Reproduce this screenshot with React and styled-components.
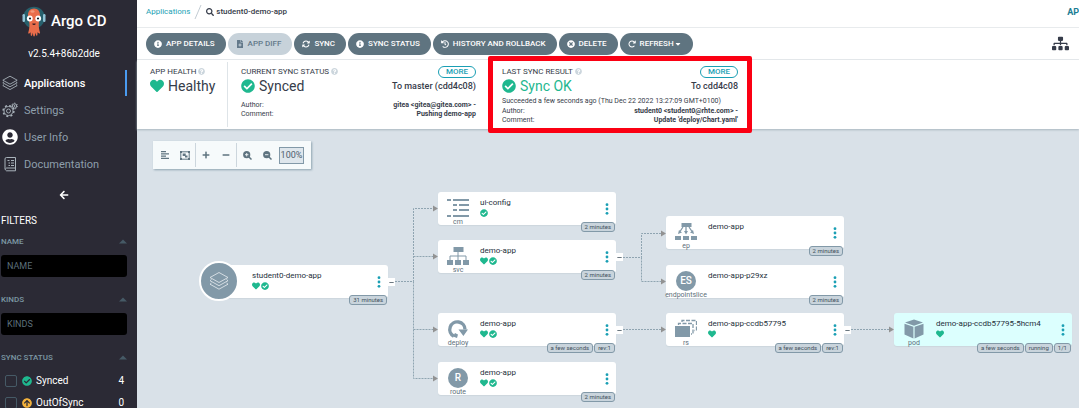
import React from "react";
import styled, { createGlobalStyle, css } from "styled-components";
import {
  FaInfoCircle, FaFileMedical, FaHistory, FaTimesCircle, FaCaretDown,
  FaSitemap, FaSearch, FaHeart, FaCheckCircle, FaArrowCircleUp, FaQuestionCircle,
  FaPlus, FaMinus, FaUserCircle, FaArrowLeft,
} from "react-icons/fa";
import { FaArrowsRotate, FaArrowRotateRight } from "react-icons/fa6";

const c = {
  side: "#2b2a35",
  text: "#363c4a",
  teal: "#1a9fb4",
  green: "#1fb88f",
  slate: "#5f7480",
  mid: "#8299a8",
  canvas: "#d9e1e8",
};

const Global = createGlobalStyle`
  *, *::before, *::after { box-sizing: border-box; }
  body { margin: 0; font-family: Roboto, "Liberation Sans", sans-serif; color: ${c.text}; background: ${c.canvas}; }
  button, input { font-family: inherit; margin: 0; }
  button { border: 0; padding: 0; background: none; color: inherit; cursor: pointer; }
  a { text-decoration: none; }
  svg { display: block; flex: none; }
  h1, h2, p, ul, dl, dd { margin: 0; padding: 0; }
`;

const Shell = styled.div`
  display: flex;
  height: 100vh;
  overflow: hidden;
`;

/* Sidebar */
const Sidebar = styled.aside`
  flex: none;
  width: 137px;
  background: ${c.side};
  color: #fff;
  overflow: hidden;
`;
const Brand = styled.div`
  display: flex;
  align-items: center;
  gap: 5px;
  padding: 5px 0 0 22px;
  font-size: 15px;
  line-height: 32px;
  font-weight: 500;
`;
const Version = styled.p`
  padding: 8px 9px 0 0;
  text-align: center;
  font-size: 10px;
  line-height: 17px;
`;
const Nav = styled.nav`
  display: flex;
  flex-direction: column;
  padding: 8px 10px 0 0;
`;
const NavLink = styled.a`
  display: flex;
  align-items: center;
  gap: 6px;
  height: 26px;
  padding-left: 2px;
  margin-bottom: 1px;
  font-size: 11px;
  color: ${(p) => (p.$active ? "#fff" : "#8e9fab")};
  font-weight: ${(p) => (p.$active ? 500 : 400)};
  border-right: 2px solid ${(p) => (p.$active ? "#4a9bf0" : "transparent")};
  svg { color: ${(p) => (p.$light ? "#fff" : "#a9b3bb")}; }
`;
const Collapse = styled.button`
  display: flex;
  justify-content: center;
  width: 128px;
  padding: 12px 0 13px;
`;
const Filters = styled.section`
  padding: 0 10px 0 1px;
`;
const FiltersTitle = styled.h2`
  font-size: 10px;
  line-height: 16px;
  font-weight: 400;
  margin-bottom: 8px;
`;
const FilterHead = styled.button`
  display: flex;
  justify-content: space-between;
  align-items: center;
  width: 100%;
  height: 10px;
  font-size: 8px;
  line-height: 10px;
  font-weight: 500;
  color: #7c98a4;
  svg { color: #465a66; }
`;
const FilterInput = styled.input`
  display: block;
  width: 100%;
  height: 22px;
  margin: 8px 0 18px;
  padding: 0 6px;
  border: 0;
  border-radius: 3px;
  background: #000;
  color: #fff;
  font-size: 9px;
  &::placeholder { color: #5c6f7a; opacity: 1; }
`;
const CheckList = styled.div`
  padding-top: 7px;
`;
const CheckRow = styled.label`
  display: flex;
  align-items: center;
  gap: 4px;
  height: 22px;
  padding: 0 3px 0 4px;
  font-size: 10px;
  line-height: 10px;
  span { flex: 1; }
`;
const Check = styled.input`
  appearance: none;
  width: 12px;
  height: 12px;
  border: 1px solid #465a66;
  border-radius: 2px;
  margin-right: 1px;
`;

/* Main column */
const Main = styled.main`
  flex: 1;
  min-width: 0;
  display: flex;
  flex-direction: column;
`;
const Bar = styled.div`
  flex: none;
  display: flex;
  align-items: center;
  background: #fff;
  border-bottom: 1px solid #e8ebed;
`;
const Crumbs = styled(Bar)`
  height: 28px;
  padding: 0 0 4px 9px;
  font-size: 8px;
  a { color: ${c.teal}; }
`;
const Crumb = styled.span`
  display: flex;
  align-items: center;
  gap: 2px;
  font-weight: 500;
`;
const PageTitle = styled.span`
  margin-left: auto;
  font-size: 9px;
  font-weight: 700;
  color: #1a7d94;
`;
const Actions = styled(Bar)`
  height: 32px;
  gap: 2px;
  padding: 0 10px 0 9px;
`;
const Action = styled.button`
  display: flex;
  align-items: center;
  gap: 4px;
  height: 22px;
  padding: 0 11px 0 8px;
  border-radius: 11px;
  background: ${c.slate};
  color: #fff;
  font-size: 8px;
  font-weight: 500;
  white-space: nowrap;
  ${(p) => p.disabled && css`background: #c7d2da; color: #63798a;`}
`;
const ActionText = styled.span`
  display: flex;
  align-items: center;
`;
const ViewButton = styled.button`
  margin-left: auto;
`;
const Status = styled.section`
  position: relative;
  z-index: 1;
  flex: none;
  display: flex;
  height: 69px;
  padding: 2px 0;
  background: #fff;
  box-shadow: 0 1px 2px #a9b6bf;
`;
const Panel = styled.div`
  position: relative;
  width: ${(p) => p.$width}px;
  padding: 4px 13px 0;
  ${(p) => p.$divided && css`border-right: 1px solid #dee4e8;`}
`;
const PanelTop = styled.div`
  display: flex;
  justify-content: space-between;
  align-items: center;
  height: 11px;
`;
const PanelLabel = styled.h2`
  display: flex;
  align-items: center;
  gap: 2px;
  font-size: 8px;
  font-weight: 400;
  white-space: nowrap;
  svg { color: #ccd6dd; }
`;
const More = styled.button`
  width: 38px;
  height: 12px;
  border: 1px solid ${c.teal};
  border-radius: 6px;
  color: ${c.teal};
  font-size: 8px;
  line-height: 10px;
  font-weight: 500;
`;
const PanelValue = styled.div`
  display: flex;
  justify-content: space-between;
  align-items: center;
  height: 17px;
  font-size: 9px;
  font-weight: 500;
`;
const Big = styled.div`
  display: flex;
  align-items: center;
  gap: 4px;
  font-size: 14px;
  line-height: 16px;
  font-weight: 400;
  color: ${(p) => (p.$ok ? c.green : c.text)};
  svg { color: ${c.green}; }
`;
const Note = styled.p`
  margin-top: 3px;
  font-size: 7px;
  line-height: 8px;
  white-space: nowrap;
`;
const Facts = styled.dl`
  display: grid;
  grid-template-columns: auto auto;
  justify-content: space-between;
  margin-top: ${(p) => p.$gap}px;
  font-size: 7px;
  line-height: 9px;
  dd { text-align: right; font-weight: 700; }
`;
const Highlight = styled.div`
  position: absolute;
  inset: -6px -1px -6px -1px;
  border: 5px solid #fb0013;
  border-radius: 2px;
  pointer-events: none;
`;

/* Resource tree */
const Canvas = styled.section`
  position: relative;
  flex: 1;
  min-height: 0;
  overflow: hidden;
  background: ${c.canvas};
`;
const Tools = styled.div`
  display: inline-flex;
  align-items: center;
  height: 28px;
  margin: 12px 16px;
  padding: 2px 7px 2px 2px;
  background: #f6fafb;
  box-shadow: 1px 1px 2px #8fa4b1;
  color: ${c.slate};
`;
const ToolGroup = styled.div`
  display: flex;
  align-items: center;
  height: 24px;
  & + & { border-left: 1px solid #ccd6dd; }
`;
const Tool = styled.button`
  display: flex;
  justify-content: center;
  width: 20px;
`;
const Zoom = styled.span`
  width: 25px;
  height: 17px;
  margin-left: 2px;
  border: 1px solid ${c.mid};
  background: #dee6ec;
  color: #4d606c;
  font-size: 9px;
  line-height: 15px;
  display: flex;
  justify-content: center;
`;
const Edges = styled.svg`
  position: absolute;
  top: 0;
  left: 0;
  width: 942px;
  height: 279px;
  pointer-events: none;
`;
const NodeCard = styled.article`
  position: absolute;
  left: ${(p) => p.$x}px;
  top: ${(p) => p.$y}px;
  display: flex;
  width: 178px;
  height: 33px;
  border-radius: 3px;
  background: ${(p) => (p.$live ? "#dcfffe" : "#fff")};
  box-shadow: 0 1px 1px #ccd6dd;
`;
const Kind = styled.div`
  display: flex;
  flex-direction: column;
  align-items: center;
  width: 42px;
  padding: 6px 2px 0 0;
  color: ${c.mid};
`;
const KindName = styled.span`
  margin-top: 1px;
  font-size: 7px;
  line-height: 7px;
  color: #5c6f7a;
`;
const Letter = styled.span`
  width: 20px;
  height: 20px;
  border-radius: 50%;
  background: ${c.mid};
  color: #fff;
  font-size: 10px;
  line-height: 20px;
  font-weight: 500;
  text-align: center;
`;
const RootDisc = styled.div`
  position: absolute;
  left: -11px;
  top: -4px;
  display: flex;
  align-items: center;
  justify-content: center;
  width: 40px;
  height: 40px;
  border: 2px solid #fff;
  border-radius: 50%;
  background: ${c.mid};
  color: #e8edf1;
`;
const NodeBody = styled.div`
  flex: 1;
  padding-top: 5px;
  font-size: 8px;
  line-height: 12px;
  white-space: nowrap;
  color: #25303b;
`;
const Marks = styled.div`
  display: flex;
  gap: 1px;
  color: ${c.green};
`;
const Menu = styled.button`
  align-self: center;
  margin-right: 7px;
  color: ${c.teal};
`;
const Badges = styled.div`
  position: absolute;
  right: 1px;
  bottom: -7px;
  display: flex;
  gap: 1px;
`;
const Badge = styled.span`
  height: 10px;
  padding: 0 3px;
  border: 1px solid ${c.mid};
  border-radius: 3px;
  background: #c9d4dc;
  color: #3f4f5b;
  font-size: 6px;
  line-height: 8px;
  white-space: nowrap;
`;
const Toggle = styled.button`
  position: absolute;
  right: -7px;
  top: 13px;
  width: 7px;
  height: 8px;
  display: flex;
  align-items: center;
  justify-content: center;
  background: #fff;
  color: #6b7780;
`;

const Octopus = () => (
  <svg width="24" height="32" viewBox="0 0 24 32">
    <circle cx="12" cy="12.500" r="10.800" fill="#27606c" />
    <rect x="0.500" y="9" width="2.500" height="8" rx="1.200" fill="#8fc3d6" />
    <rect x="21" y="9" width="2.500" height="8" rx="1.200" fill="#8fc3d6" />
    <path d="M12 3.500c-3.700 0-6 2.800-6 6.500 0 3.500 1.200 6 1.400 8.500.2 3-.2 6-1.100 9-.3 1.100.6 1.500 1.300.8l1-1 .1 2.700c.1 1.100 1.200 1.200 1.500.1l.6-2.400.5 3c.2.900 1.300.9 1.500 0l.5-3 .7 2.400c.3.900 1.300.8 1.400-.2l.1-2.600 1.300 1c.8.500 1.500 0 1.200-.9-.9-3-1.400-6-1.200-8.900.1-2.500 1.200-5 1.200-8.500 0-3.700-2.300-6.500-6-6.500z" fill="#e96d4b" />
    <ellipse cx="10.500" cy="6.500" rx="2" ry="1.300" fill="#f59a7c" />
    <circle cx="7.800" cy="13.500" r="2.900" fill="#fff" />
    <circle cx="16.200" cy="13.500" r="2.900" fill="#fff" />
    <circle cx="8" cy="13.500" r="1.100" fill="#171b24" />
    <circle cx="16" cy="13.500" r="1.100" fill="#171b24" />
    <path d="M10.300 18.500h3.400c0 2-3.400 2-3.400 0z" fill="#432126" />
  </svg>
);
const CaretUp = () => (
  <svg width="8" height="8" viewBox="0 0 8 8"><path d="M4 1.500 8 5.500H0z" fill="currentColor" /></svg>
);
const Layers = ({ size, weight = 1.1 }) => (
  <svg width={size} height={size} viewBox="0 0 20 20" fill="none" stroke="currentColor" strokeWidth={weight} strokeLinejoin="round">
    <path d="M10 1.500 19 6.500 10 11.500 1 6.500z" />
    <path d="M2.500 8.500 1 9.700l9 5 9-5-1.500-1.200" />
    <path d="M2.500 12 1 13.200l9 5 9-5-1.500-1.200" />
  </svg>
);
const Gears = () => (
  <svg width="16" height="16" viewBox="0 0 16 16" fill="none" stroke="currentColor">
    <circle cx="6.500" cy="9" r="4.500" strokeWidth="0.900" />
    <circle cx="6.500" cy="9" r="5.400" strokeWidth="1.500" strokeDasharray="2 2.240" />
    <circle cx="6.500" cy="9" r="2" strokeWidth="0.900" />
    <circle cx="12.500" cy="4" r="2.200" strokeWidth="0.900" />
    <circle cx="12.500" cy="4" r="2.900" strokeWidth="1" strokeDasharray="1.200 1.400" />
    <circle cx="12.500" cy="4" r="0.600" />
  </svg>
);
const Docs = () => (
  <svg width="16" height="16" viewBox="0 0 16 16" fill="none" stroke="currentColor">
    <path d="M4.500 1.500h9v10.500h-9a1.500 1.500 0 0 0 0 2.800h9V12M3 13.500V3a1.500 1.500 0 0 1 1.500-1.500" />
    <path d="M5.500 4.500h2M9 4.500h3M6.500 7h1.500M9 7h3M6.500 9.500h1.500M9 9.500h3" />
  </svg>
);
const Dots = () => (
  <svg width="4" height="12" viewBox="0 0 4 12" fill="currentColor">
    <circle cx="2" cy="1.700" r="1.400" />
    <circle cx="2" cy="6" r="1.400" />
    <circle cx="2" cy="10.300" r="1.400" />
  </svg>
);
const AlignIcon = () => (
  <svg width="8" height="8" viewBox="0 0 8 8" fill="currentColor">
    <path d="M0 0h5v1.200H0zM0 2.200h8v1.200H0zM0 4.500h5v1.200H0zM0 6.800h8V8H0z" />
  </svg>
);
const GroupIcon = () => (
  <svg width="10" height="9" viewBox="0 0 10 9" fill="none" stroke="currentColor">
    <path d="M0.800 0.800h8.400v7.400H0.800z" />
    <path d="M0 0h2v2H0zM8 0h2v2H8zM0 7h2v2H0zM8 7h2v2H8zM2.700 2.500h3v2.500h-3zM5 4.500h2.500v2H5z" fill="currentColor" stroke="none" />
  </svg>
);
const Magnifier = ({ plus }) => (
  <svg width="9" height="9" viewBox="0 0 9 9">
    <circle cx="3.700" cy="3.700" r="3.600" fill="currentColor" />
    <path d="M6 6l2.500 2.500" stroke="currentColor" strokeWidth="1.500" />
    <path d={plus ? "M2 3.700h3.400M3.700 2v3.400" : "M2 3.700h3.400"} stroke="#f6fafb" strokeWidth="0.900" />
  </svg>
);
const drawings = {
  cm: (
    <path d="M0 1h4v2H0zM6 1h16v2H6zM6 6h4v2H6zM12 6h10v2H12zM6 11h4v2H6zM12 11h10v2H12zM0 17h4v2H0zM6 17h16v2H6z" />
  ),
  svc: (
    <>
      <path d="M6.500 1h10v5h-10zM0 14h6v5H0zM8 14h6v5H8zM16 14h6v5h-6z" />
      <path d="M11 6v8M3 14v-4h16v4" fill="none" stroke="currentColor" />
    </>
  ),
  ep: (
    <>
      <path d="M6.500 1h10v4h-10zM0 14h6v4H0zM8 14h6v4H8zM16 14h6v4h-6zM3 12l1-4 3 2.500zM19 12l-1-4-3 2.500zM9 9h4l-2 3.500z" />
      <path d="M8 5 5 9.500M14 5l3 4.500M11 5v5" fill="none" stroke="currentColor" strokeWidth="1.300" />
    </>
  ),
  rs: (
    <>
      <path d="M0 7h15v11H0z" />
      <path d="M3.500 6V4.500h14.500v10.500h-2M7 3V1.500h14.500v10h-2" fill="none" stroke="currentColor" strokeWidth="1.300" strokeDasharray="4 1.500" />
    </>
  ),
  deploy: (
    <>
      <path d="M6.800 17.200A7.600 7.600 0 1 1 18 10.500" fill="none" stroke="currentColor" strokeWidth="3.400" />
      <path d="M11.500 10.500h9.500l-4.600 6.500zM8 14l3 1.500-1 3.500-4-1.500z" />
    </>
  ),
  pod: (
    <>
      <path d="M11 0.500 20 3.500 11 6.700 2 3.500z" />
      <path d="M1.500 4.700 10.400 7.800V19.500L1.500 15.500zM20.500 4.700 11.600 7.800V19.500l8.900-4z" />
    </>
  ),
};
const KindIcon = ({ kind, letter }) =>
  letter ? <Letter>{letter}</Letter> : (
    <svg width="22" height="20" viewBox="0 0 22 20" fill="currentColor">{drawings[kind]}</svg>
  );

const nodes = [
  { x: 73, y: 136, name: "student0-demo-app", root: true, heart: true, sync: true, tags: ["31 minutes"], open: true },
  { x: 301, y: 63, name: "ui-config", kind: "cm", sync: true, tags: ["2 minutes"] },
  { x: 301, y: 111, name: "demo-app", kind: "svc", heart: true, sync: true, tags: ["2 minutes"], open: true },
  { x: 301, y: 184, name: "demo-app", kind: "deploy", heart: true, sync: true, tags: ["a few seconds", "rev:1"], open: true },
  { x: 301, y: 233, name: "demo-app", kind: "route", letter: "R", heart: true, sync: true, tags: ["2 minutes"] },
  { x: 529, y: 87, name: "demo-app", kind: "ep", tags: ["2 minutes"] },
  { x: 529, y: 136, name: "demo-app-p29xz", kind: "endpointslice", letter: "ES", tags: ["2 minutes"] },
  { x: 529, y: 184, name: "demo-app-ccdb57795", kind: "rs", heart: true, tags: ["a few seconds", "rev:1"], open: true },
  { x: 757, y: 184, name: "demo-app-ccdb57795-5hcm4", kind: "pod", heart: true, live: true, tags: ["a few seconds", "running", "1/1"] },
];
const edges = [
  "M258 152.500H276.500V79.500H297", "M276.500 127.500H297", "M276.500 152.500V200.500H297", "M276.500 200.500V249.500H297",
  "M486 128.500H504.500V104.500H525", "M504.500 128.500V152.500H525", "M486 200.500H525", "M714 200.500H753",
];
const arrows = [[301, 79.5], [301, 127.5], [301, 200.5], [301, 249.5], [529, 104.5], [529, 152.5], [529, 200.5], [757, 200.5]];

const Node = ({ n }) => (
  <NodeCard $x={n.x} $y={n.y} $live={n.live}>
    <Kind>
      {n.root ? <RootDisc><Layers size={20} weight={0.8} /></RootDisc> : (
        <><KindIcon kind={n.kind} letter={n.letter} /><KindName>{n.kind}</KindName></>
      )}
    </Kind>
    <NodeBody>
      {n.name}
      <Marks>
        {n.heart && <FaHeart size={8} />}
        {n.sync && <FaCheckCircle size={8} />}
      </Marks>
    </NodeBody>
    <Menu aria-label={`${n.name} menu`}><Dots /></Menu>
    <Badges>{n.tags.map((t) => <Badge key={t}>{t}</Badge>)}</Badges>
    {n.open && <Toggle aria-label="Collapse children"><FaMinus size={5} /></Toggle>}
  </NodeCard>
);

const actions = [
  ["APP DETAILS", FaInfoCircle], ["APP DIFF", FaFileMedical], ["SYNC", FaArrowsRotate], ["SYNC STATUS", FaInfoCircle],
  ["HISTORY AND ROLLBACK", FaHistory], ["DELETE", FaTimesCircle], ["REFRESH", FaArrowRotateRight],
];

export default function App() {
  return (
    <Shell>
      <Global />
      <Sidebar>
        <Brand><Octopus />Argo CD</Brand>
        <Version>v2.5.4+86b2dde</Version>
        <Nav>
          <NavLink href="#applications" $active><Layers size={16} />Applications</NavLink>
          <NavLink href="#settings"><Gears />Settings</NavLink>
          <NavLink href="#user" $light><FaUserCircle size={16} />User Info</NavLink>
          <NavLink href="#docs"><Docs />Documentation</NavLink>
        </Nav>
        <Collapse aria-label="Collapse sidebar"><FaArrowLeft size={10} /></Collapse>
        <Filters>
          <FiltersTitle>FILTERS</FiltersTitle>
          <FilterHead>NAME<CaretUp /></FilterHead>
          <FilterInput aria-label="Name" placeholder="NAME" />
          <FilterHead>KINDS<CaretUp /></FilterHead>
          <FilterInput aria-label="Kinds" placeholder="KINDS" />
          <FilterHead>SYNC STATUS<CaretUp /></FilterHead>
          <CheckList>
            <CheckRow><Check type="checkbox" /><FaCheckCircle size={10} color={c.green} /><span>Synced</span>4</CheckRow>
            <CheckRow><Check type="checkbox" /><FaArrowCircleUp size={10} color="#f4b23c" /><span>OutOfSync</span>0</CheckRow>
          </CheckList>
        </Filters>
      </Sidebar>
      <Main>
        <Crumbs>
          <a href="#applications">Applications</a>
          <svg width="16" height="14" viewBox="0 0 16 14"><path d="M5 14 11 0" stroke="#c3ccd3" /></svg>
          <Crumb><FaSearch size={8} />student0-demo-app</Crumb>
          <PageTitle>AP</PageTitle>
        </Crumbs>
        <Actions>
          {actions.map(([label, Icon]) => (
            <Action key={label} disabled={label === "APP DIFF"}>
              <Icon size={8} />
              <ActionText>{label}{label === "REFRESH" && <FaCaretDown size={8} />}</ActionText>
            </Action>
          ))}
          <ViewButton aria-label="Tree view"><FaSitemap size={17} /></ViewButton>
        </Actions>
        <Status>
          <Panel $width={91} $divided>
            <PanelTop><PanelLabel>APP HEALTH<FaQuestionCircle size={7} /></PanelLabel></PanelTop>
            <PanelValue><Big><FaHeart size={14} />Healthy</Big></PanelValue>
          </Panel>
          <Panel $width={261}>
            <PanelTop><PanelLabel>CURRENT SYNC STATUS<FaQuestionCircle size={7} /></PanelLabel><More>MORE</More></PanelTop>
            <PanelValue><Big><FaCheckCircle size={14} />Synced</Big>To master (cdd4c08)</PanelValue>
            <Facts $gap={7}>
              <dt>Author:</dt><dd>gitea &lt;gitea@gitea.com&gt; -</dd>
              <dt>Comment:</dt><dd>Pushing demo-app</dd>
            </Facts>
          </Panel>
          <Panel $width={262}>
            <PanelTop><PanelLabel>LAST SYNC RESULT<FaQuestionCircle size={7} /></PanelLabel><More>MORE</More></PanelTop>
            <PanelValue><Big $ok><FaCheckCircle size={14} />Sync OK</Big>To cdd4c08</PanelValue>
            <Note>Succeeded a few seconds ago (Thu Dec 22 2022 13:27:09 GMT+0100)</Note>
            <Facts $gap={2}>
              <dt>Author:</dt><dd>student0 &lt;student0@rhte.com&gt; -</dd>
              <dt>Comment:</dt><dd>Update 'deploy/Chart.yaml'</dd>
            </Facts>
            <Highlight />
          </Panel>
        </Status>
        <Canvas>
          <Tools>
            <ToolGroup>
              <Tool aria-label="Align"><AlignIcon /></Tool>
              <Tool aria-label="Group"><GroupIcon /></Tool>
            </ToolGroup>
            <ToolGroup>
              <Tool aria-label="Expand"><FaPlus size={8} /></Tool>
              <Tool aria-label="Shrink"><FaMinus size={8} /></Tool>
            </ToolGroup>
            <ToolGroup>
              <Tool aria-label="Zoom in"><Magnifier plus /></Tool>
              <Tool aria-label="Zoom out"><Magnifier /></Tool>
              <Zoom>100%</Zoom>
            </ToolGroup>
          </Tools>
          <Edges viewBox="0 0 942 279">
            <g fill="none" stroke="#8fa4b1" strokeDasharray="2 1">{edges.map((d) => <path key={d} d={d} />)}</g>
            <g fill="#929292">{arrows.map(([x, y]) => <path key={`${x}-${y}`} d={`M${x} ${y}l-5-3v6z`} />)}</g>
          </Edges>
          {nodes.map((n) => <Node key={`${n.x}-${n.y}`} n={n} />)}
        </Canvas>
      </Main>
    </Shell>
  );
}
